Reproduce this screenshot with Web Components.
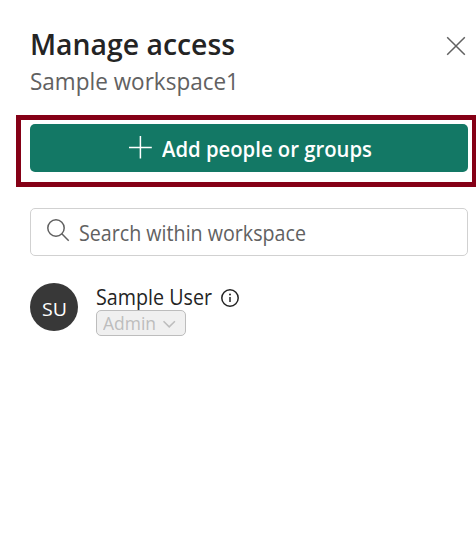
<!DOCTYPE html>
<html lang="en">
<head>
<meta charset="utf-8">
<title>Manage access</title>
<style>
html,body{margin:0;height:100%;background:#fff;overflow:hidden}
body{font-family:"Open Sans","Noto Sans",sans-serif;color:#242424}
</style>
</head>
<body>
<access-panel></access-panel>
<script>
// One line of text, condensed so that it spans the width given in its "span" attribute.
class FitText extends HTMLElement{
  constructor(){
    super();
    this.attachShadow({mode:'open'}).innerHTML=`<style>:host{display:block;white-space:nowrap}span{display:inline-block;transform-origin:0 50%}</style><span><slot></slot></span>`;
  }
  connectedCallback(){
    const w=+this.getAttribute('span'), s=this.shadowRoot.querySelector('span');
    s.style.transform='scaleX('+(w/s.getBoundingClientRect().width)+')';
    this.style.width=w+'px';
  }
}
class PanelHeader extends HTMLElement{
  constructor(){
    super();
    this.attachShadow({mode:'open'}).innerHTML=`<style>
    :host{display:flex;justify-content:space-between;padding:25px 10px 0 30px;height:74px}
    .t{font-size:28px;font-weight:600;line-height:38px}
    .s{font-size:24px;line-height:36px;color:#616161}
    svg{display:block;margin-top:11px}
    </style><div><fit-text class="t" span="205">Manage access</fit-text><fit-text class="s" span="209">Sample workspace1</fit-text></div>
    <svg width="20" height="20" viewBox="0 0 20 20" fill="none" stroke="#616161" stroke-width="1.5"><path d="M1.2 1.2 18.8 18.8M18.8 1.2 1.2 18.8"/></svg>`;
  }
}
class AddButton extends HTMLElement{
  constructor(){
    super();
    this.attachShadow({mode:'open'}).innerHTML=`<style>
    :host{display:block;box-sizing:border-box;margin:16px 0 0 16px;width:460px;height:72px;border:5px solid #850016;border-right-width:4px;padding:4px 4px 0 9px}
    button{all:unset;box-sizing:border-box;display:flex;width:438px;height:48px;padding-left:98px;gap:9px;background:#137865;border-radius:5px;color:#fff;font-size:21px;font-weight:600;line-height:50px}
    svg{margin-top:11px;flex:none}
    </style><button><svg width="25" height="25" viewBox="0 0 25 25" fill="none" stroke="#fff" stroke-width="1.5"><path d="M12.4 1v22.5M1 12.5h22.8"/></svg><fit-text span="210">Add people or groups</fit-text></button>`;
  }
}
class SearchBox extends HTMLElement{
  constructor(){
    super();
    this.attachShadow({mode:'open'}).innerHTML=`<style>
    :host{box-sizing:border-box;display:flex;margin:21px 0 0 30px;width:438px;height:48px;border:1px solid #d1d1d1;border-radius:5px;padding-left:15px;gap:8px;color:#616161;font-size:21px;line-height:49px}
    svg{margin-top:9px;flex:none}
    </style><svg width="25" height="25" viewBox="0 0 25 25" fill="none" stroke="#616161" stroke-width="1.5"><circle cx="10" cy="10" r="8.2"/><path d="M15.8 15.8 22.7 22.7"/></svg><fit-text span="227">Search within workspace</fit-text>`;
  }
}
class MemberRow extends HTMLElement{
  constructor(){
    super();
    this.attachShadow({mode:'open'}).innerHTML=`<style>
    :host{display:flex;gap:18px;margin:26px 0 0 30px}
    .a{width:48px;height:48px;margin-top:1px;border-radius:50%;background:#383838;color:#fff;display:flex;justify-content:center;font-size:19px;line-height:52px}
    .n{display:flex;gap:8px;height:28px;font-size:21px;line-height:30px}
    .n svg{margin-top:6px}
    .r{box-sizing:border-box;display:flex;width:90px;height:26px;padding-left:6px;gap:7px;border:1px solid #bdbdbd;border-radius:5px;background:#f0f0f0;color:#bdbdbd;font-size:18px;line-height:25px}
    .r svg{margin-top:8px}
    </style><div class="a"><fit-text span="25">SU</fit-text></div>
    <div><div class="n"><fit-text span="116">Sample User</fit-text><svg width="20" height="20" viewBox="0 0 20 20" fill="none" stroke="#242424" stroke-width="1.5"><circle cx="10" cy="10" r="8.2"/><path d="M10 9v5"/><circle cx="10" cy="6.6" r="1" fill="#242424" stroke="none"/></svg></div>
    <div class="r"><fit-text span="53">Admin</fit-text><svg width="14" height="12" viewBox="0 0 14 12" fill="none" stroke="#bdbdbd" stroke-width="1.5"><path d="M.5 2.2 6.2 7.9 11.9 2.2"/></svg></div></div>`;
  }
}
class AccessPanel extends HTMLElement{
  constructor(){
    super();
    this.attachShadow({mode:'open'}).innerHTML=`<style>:host{display:block;width:476px;height:548px;background:#fff}</style>
    <panel-header></panel-header><add-button></add-button><search-box></search-box><member-row></member-row>`;
  }
}
customElements.define('panel-header',PanelHeader);
customElements.define('add-button',AddButton);
customElements.define('search-box',SearchBox);
customElements.define('member-row',MemberRow);
customElements.define('access-panel',AccessPanel);
customElements.define('fit-text',FitText);
</script>
</body>
</html>
